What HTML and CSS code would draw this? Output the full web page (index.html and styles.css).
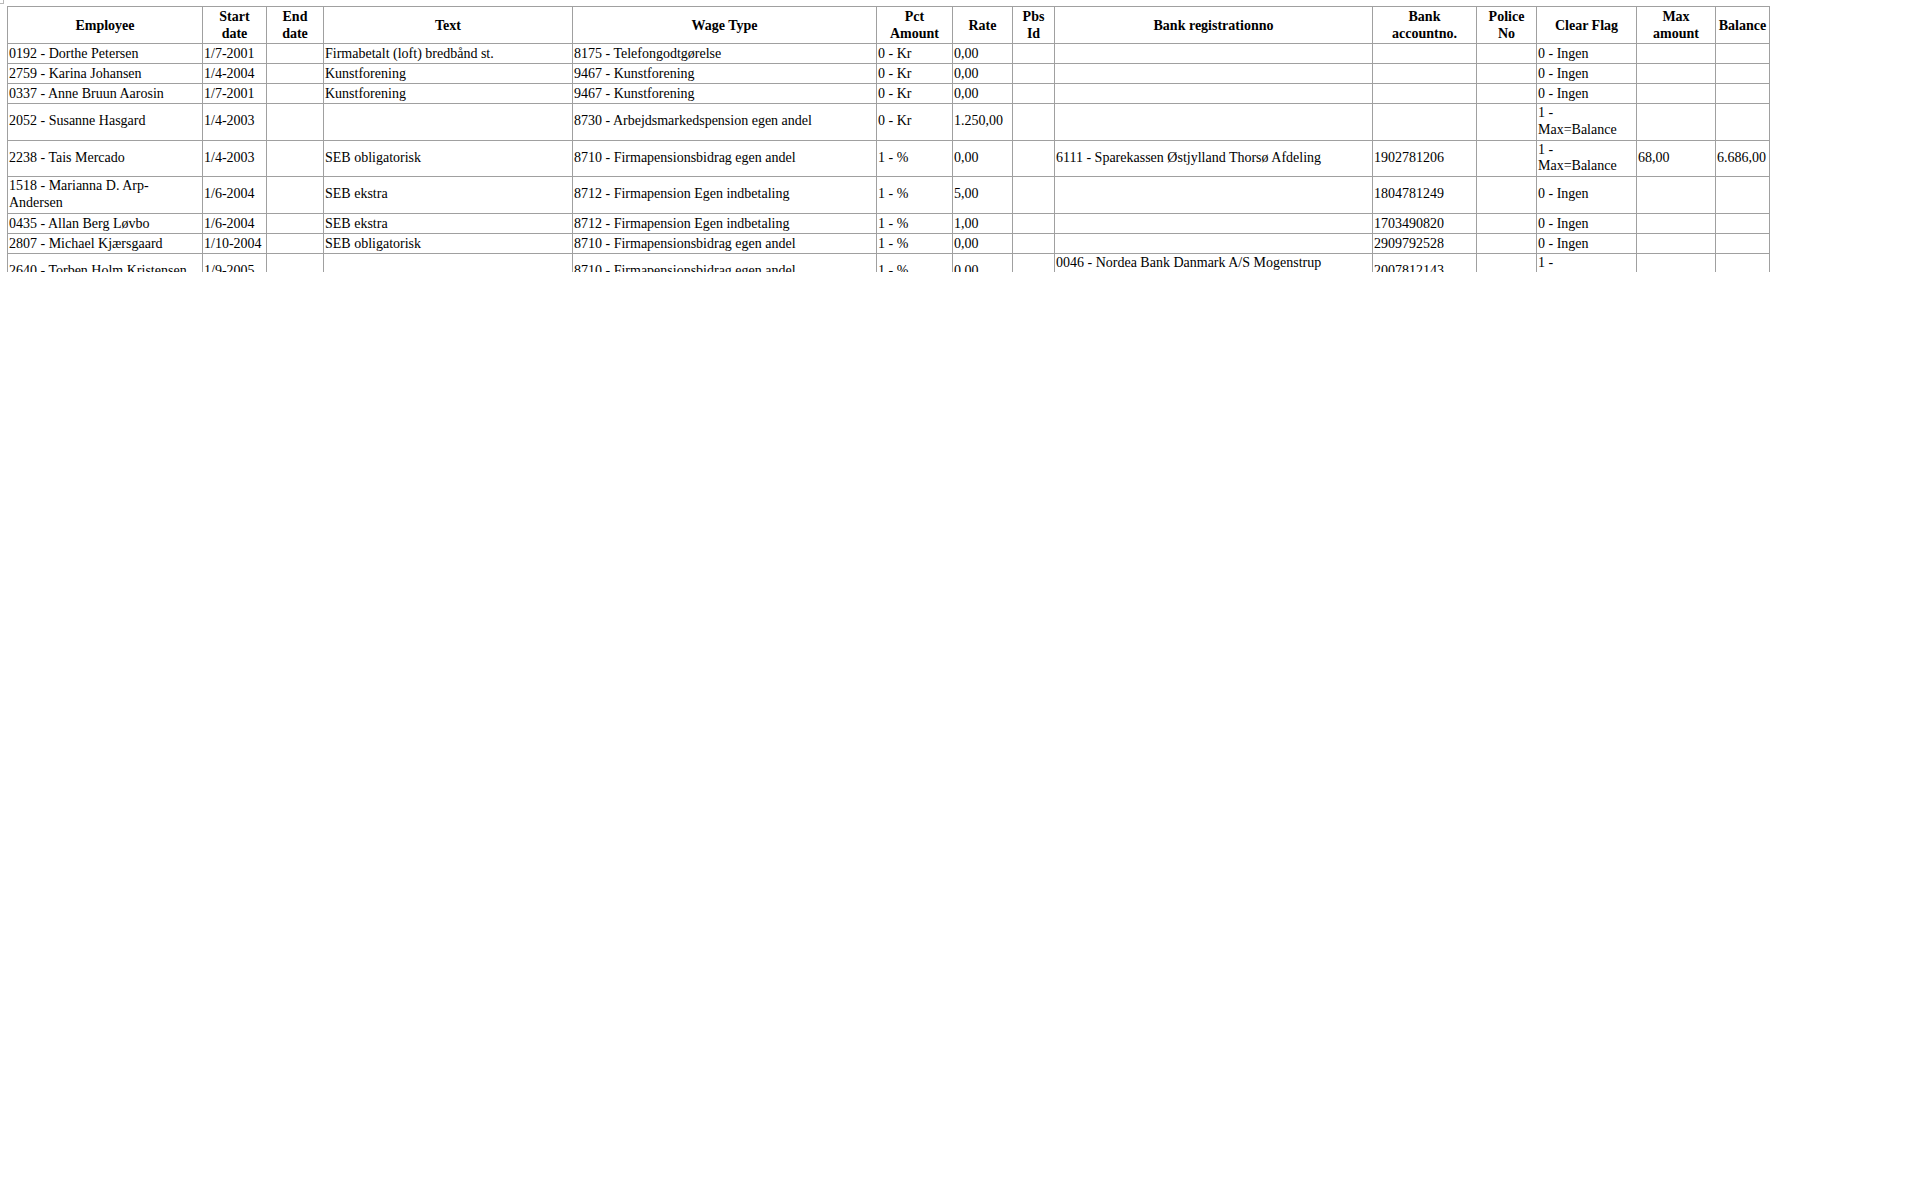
FILE: index.html
```html
<!DOCTYPE html>
<html>
<head>
<meta charset="utf-8">
<title>Employee wage types</title>
<link rel="stylesheet" href="styles.css">
</head>
<body>
<div class="frame">
  <span class="corner"></span>
  <table class="grid">
    <colgroup>
      <col class="c-emp"><col class="c-start"><col class="c-end"><col class="c-text"><col class="c-wage"><col class="c-pct"><col class="c-rate"><col class="c-pbs"><col class="c-bank"><col class="c-acct"><col class="c-police"><col class="c-clear"><col class="c-max"><col class="c-bal">
    </colgroup>
    <thead>
      <tr>
        <th>Employee</th>
        <th>Start<br>date</th>
        <th>End<br>date</th>
        <th>Text</th>
        <th>Wage Type</th>
        <th>Pct<br>Amount</th>
        <th>Rate</th>
        <th>Pbs<br>Id</th>
        <th>Bank registrationno</th>
        <th>Bank<br>accountno.</th>
        <th>Police<br>No</th>
        <th>Clear Flag</th>
        <th>Max<br>amount</th>
        <th>Balance</th>
      </tr>
    </thead>
    <tbody>
      <tr><td>0192 - Dorthe Petersen</td><td>1/7-2001</td><td></td><td>Firmabetalt (loft) bredbånd st.</td><td>8175 - Telefongodtgørelse</td><td>0 - Kr</td><td>0,00</td><td></td><td></td><td></td><td></td><td>0 - Ingen</td><td></td><td></td></tr>
      <tr><td>2759 - Karina Johansen</td><td>1/4-2004</td><td></td><td>Kunstforening</td><td>9467 - Kunstforening</td><td>0 - Kr</td><td>0,00</td><td></td><td></td><td></td><td></td><td>0 - Ingen</td><td></td><td></td></tr>
      <tr><td>0337 - Anne Bruun Aarosin</td><td>1/7-2001</td><td></td><td>Kunstforening</td><td>9467 - Kunstforening</td><td>0 - Kr</td><td>0,00</td><td></td><td></td><td></td><td></td><td>0 - Ingen</td><td></td><td></td></tr>
      <tr class="tall"><td>2052 - Susanne Hasgard</td><td>1/4-2003</td><td></td><td></td><td>8730 - Arbejdsmarkedspension egen andel</td><td>0 - Kr</td><td>1.250,00</td><td></td><td></td><td></td><td></td><td>1 -<br>Max=Balance</td><td></td><td></td></tr>
      <tr class="tall"><td>2238 - Tais Mercado</td><td>1/4-2003</td><td></td><td>SEB obligatorisk</td><td>8710 - Firmapensionsbidrag egen andel</td><td>1 - %</td><td>0,00</td><td></td><td>6111 - Sparekassen Østjylland Thorsø Afdeling</td><td>1902781206</td><td></td><td>1 -<br>Max=Balance</td><td>68,00</td><td>6.686,00</td></tr>
      <tr class="tall"><td>1518 - Marianna D. Arp-<br>Andersen</td><td>1/6-2004</td><td></td><td>SEB ekstra</td><td>8712 - Firmapension Egen indbetaling</td><td>1 - %</td><td>5,00</td><td></td><td></td><td>1804781249</td><td></td><td>0 - Ingen</td><td></td><td></td></tr>
      <tr><td>0435 - Allan Berg Løvbo</td><td>1/6-2004</td><td></td><td>SEB ekstra</td><td>8712 - Firmapension Egen indbetaling</td><td>1 - %</td><td>1,00</td><td></td><td></td><td>1703490820</td><td></td><td>0 - Ingen</td><td></td><td></td></tr>
      <tr><td>2807 - Michael Kjærsgaard</td><td>1/10-2004</td><td></td><td>SEB obligatorisk</td><td>8710 - Firmapensionsbidrag egen andel</td><td>1 - %</td><td>0,00</td><td></td><td></td><td>2909792528</td><td></td><td>0 - Ingen</td><td></td><td></td></tr>
      <tr class="tall"><td>2640 - Torben Holm Kristensen</td><td>1/9-2005</td><td></td><td></td><td>8710 - Firmapensionsbidrag egen andel</td><td>1 - %</td><td>0,00</td><td></td><td>0046 - Nordea Bank Danmark A/S Mogenstrup<br>Afdeling</td><td>2007812143</td><td></td><td>1 -<br>Max=Balance</td><td></td><td></td></tr>
    </tbody>
  </table>
</div>
</body>
</html>
```
FILE: styles.css
```css
html, body {
  margin: 0;
  padding: 0;
  background: #ffffff;
}

.frame {
  position: relative;
  height: 272px;
  overflow: hidden;
  padding: 6px 0 0 7px;
  box-sizing: border-box;
}

.corner {
  position: absolute;
  left: 0;
  top: 0;
  width: 3px;
  height: 3px;
  border: 1px solid #b8b8b8;
  border-top: none;
  border-left: none;
}

.grid {
  border-collapse: collapse;
  table-layout: fixed;
  width: 1763px;
  font-family: "Liberation Serif", "Times New Roman", serif;
  font-size: 14px;
  line-height: 17px;
  color: #000000;
}

.grid th,
.grid td {
  border: 1px solid #a0a0a0;
  padding: 1px;
  vertical-align: middle;
  overflow: hidden;
}

.grid th {
  font-weight: bold;
  text-align: center;
}

.grid td {
  text-align: left;
  font-weight: normal;
}

.grid .tall td {
  line-height: 16.75px;
}

.c-emp { width: 195px; }
.c-start { width: 64px; }
.c-end { width: 57px; }
.c-text { width: 249px; }
.c-wage { width: 304px; }
.c-pct { width: 76px; }
.c-rate { width: 60px; }
.c-pbs { width: 42px; }
.c-bank { width: 318px; }
.c-acct { width: 104px; }
.c-police { width: 60px; }
.c-clear { width: 100px; }
.c-max { width: 79px; }
.c-bal { width: 54px; }
```
